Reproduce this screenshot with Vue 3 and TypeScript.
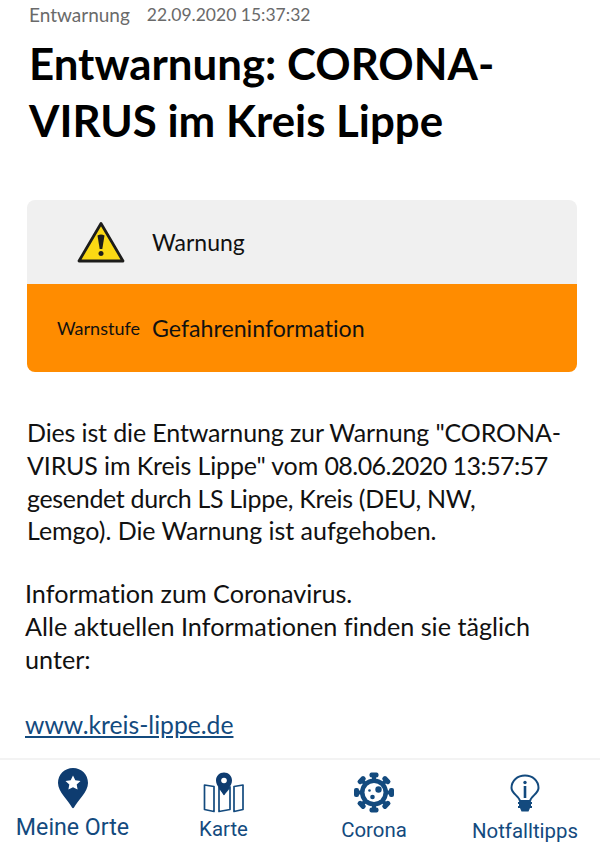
<script setup lang="ts">
const spikes: number[] = [0, 45, 90, 135, 180, 225, 270, 315]
</script>

<template>
  <div class="page">
    <main class="content">
      <div class="meta"><span class="kind">Entwarnung</span><span>22.09.2020 15:37:32</span></div>
      <h1 class="title">Entwarnung: CORONA-<br />VIRUS im Kreis Lippe</h1>
      <section class="card">
        <div class="card-top">
          <svg class="warn" width="48" height="42" viewBox="0 0 48 42">
            <path d="M24 2.500 L46 40 H2 Z" fill="#fbd914" stroke="#1d1d1b" stroke-width="2.800" stroke-linejoin="round" />
            <path d="M20.500 14.500 Q24 12.500 27.500 14.500 L25.300 28 H22.700 Z" fill="#1d1d1b" />
            <circle cx="24" cy="32.500" r="2.500" fill="#1d1d1b" />
          </svg>
          <span class="warn-text">Warnung</span>
        </div>
        <div class="card-bottom">
          <span class="level-label">Warnstufe</span>
          <span class="level-value">Gefahreninformation</span>
        </div>
      </section>
      <p class="body first">Dies ist die Entwarnung zur Warnung "CORONA-<br />VIRUS im Kreis Lippe" vom <span class="tight">08.06.2020 13:57:57</span><br /><span class="snug">gesendet durch LS Lippe, Kreis (DEU, NW,</span><br /><span class="even">Lemgo). Die Warnung ist aufgehoben.</span></p>
      <p class="body second">Information zum Coronavirus.<br />Alle aktuellen Informationen finden sie täglich<br />unter:</p>
      <a class="link" href="#">www.kreis-lippe.de</a>
    </main>
    <nav class="tabs">
      <div class="tab">
        <svg width="32" height="42" viewBox="0 0 32 42">
          <path d="M16 1 C7.500 1 1 7.500 1 16 C1 25 11 33 15 40.500 Q16 42 17 40.500 C21 33 31 25 31 16 C31 7.500 24.500 1 16 1 Z" fill="#0e3c70" />
          <path d="M16 8.500 l2.300 4.700 5.200 .7 -3.800 3.600 .9 5.100 -4.600 -2.400 -4.600 2.400 .9 -5.100 -3.800 -3.600 5.200 -.7 Z" fill="#fff" />
        </svg>
        <span class="label big">Meine Orte</span>
      </div>
      <div class="tab low">
        <svg width="42" height="41" viewBox="0 0 42 41">
          <g fill="none" stroke="#134a7e" stroke-width="1.700" stroke-linejoin="round">
            <path d="M1.500 13 L11 14.500 V39.500 L1.500 37.500 Z" />
            <path d="M16 15 L21 22 L27 15 V37.500 L16 39.500 Z" />
            <path d="M31 14.500 L40 13 V37.500 L31 39.500 Z" />
          </g>
          <path d="M21 .5 C16.500 .5 13 4 13 8.500 C13 14 18.500 18 21 23.500 C23.500 18 29 14 29 8.500 C29 4 25.500 .5 21 .5 Z" fill="#0e3c70" />
          <circle cx="21" cy="8.500" r="2.800" fill="#fff" />
        </svg>
        <span class="label karte">Karte</span>
      </div>
      <div class="tab low">
        <svg width="42" height="41" viewBox="0 0 42 41">
          <g v-for="a in spikes" :key="a" :transform="`rotate(${a} 21 20.500)`">
            <path d="M21 20.500 V3" stroke="#134a7e" stroke-width="4" />
            <rect x="16.500" y="0.500" width="9" height="5" rx="2" fill="#134a7e" />
          </g>
          <circle cx="21" cy="20.500" r="14" fill="#134a7e" />
          <circle cx="21" cy="20.500" r="9.500" fill="#fff" />
          <circle cx="25.500" cy="17.500" r="3.200" fill="#134a7e" />
          <circle cx="19.500" cy="25" r="2.300" fill="#134a7e" />
          <circle cx="16.500" cy="18.500" r="1.300" fill="#134a7e" />
        </svg>
        <span class="label corona">Corona</span>
      </div>
      <div class="tab lower">
        <svg width="30" height="39" viewBox="0 0 30 39">
          <path d="M10 27 C9 22 1.500 19.500 1.500 14 C1.500 6.500 7.500 1.500 15 1.500 C22.500 1.500 28.500 6.500 28.500 14 C28.500 19.500 21 22 20 27 Z" fill="none" stroke="#134a7e" stroke-width="2" />
          <circle cx="15" cy="8.500" r="1.700" fill="#134a7e" />
          <rect x="13.700" y="12" width="2.600" height="12" fill="#134a7e" />
          <path d="M8 28 H22 V30 H21 V32 H22 V34 H20 L18.500 37.500 H11.500 L10 34 H8 V32 H9 V30 H8 Z" fill="#134a7e" />
        </svg>
        <span class="label notfall">Notfalltipps</span>
      </div>
    </nav>
  </div>
</template>

<style>
html, body { margin: 0; background: #fff; }
</style>

<style scoped>
.page {
  width: 600px;
  height: 849px;
  overflow: hidden;
  display: flex;
  flex-direction: column;
  font-family: Lato, "Open Sans", sans-serif;
  font-variant-ligatures: none;
  color: #111;
}
.content { flex: 1; padding: 4px 23px 0 25px; min-height: 0; }
.meta {
  display: flex;
  gap: 17px;
  padding-left: 4px;
  font-size: 17.500px;
  line-height: 22px;
  color: #6a6a6a;
}
.kind { font-size: 19px; }
.title {
  margin: 9px 0 0 4px;
  font-size: 43.800px;
  line-height: 57px;
  font-weight: 700;
  color: #000;
}
.card {
  margin: 51px 0 0 2px;
  width: 550px;
  border-radius: 8px;
  overflow: hidden;
}
.card-top {
  height: 84px;
  background: #f0f0f0;
  display: flex;
  align-items: center;
  padding-left: 50px;
}
.warn { margin-right: 27px; }
.warn-text { font-size: 23px; }
.card-bottom {
  height: 88px;
  background: #ff8c00;
  display: flex;
  align-items: center;
  padding-left: 30px;
  color: #111;
}
.level-label { font-size: 18px; width: 95px; }
.level-value { font-size: 23.200px; }
.body {
  margin: 44px 0 0;
  font-size: 25px;
  line-height: 32.800px;
}
.first { padding-left: 2px; letter-spacing: -0.13px; }
.tight { letter-spacing: -0.55px; }
.snug { letter-spacing: -0.32px; }
.even { letter-spacing: -0.03px; }
.second { margin-top: 30px; font-size: 25.200px; }
.link {
  display: block;
  margin-top: 32px;
  font-size: 24.700px;
  line-height: 33px;
  color: #134a7e;
  text-decoration: underline;
}
.tabs {
  height: 91px;
  flex: none;
  border-top: 2px solid #f3f3f3;
  box-sizing: border-box;
  display: grid;
  grid-template-columns: 145px 157px 144px 154px;
  font-family: Roboto, sans-serif;
  color: #134a7e;
}
.tab {
  display: flex;
  flex-direction: column;
  align-items: center;
  padding-top: 7px;
}
.low { padding-top: 12px; }
.lower { padding-top: 14px; padding-left: 4px; }
.label { font-size: 20.400px; line-height: 26px; margin-top: 2px; }
.big { font-size: 23.200px; margin-top: 5px; }
.karte { margin-top: 3px; }
.corona { margin-top: 4px; }
.notfall { margin-top: 5px; }
</style>
